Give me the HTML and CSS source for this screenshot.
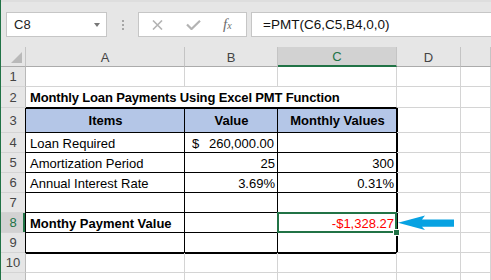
FILE: index.html
```html
<!DOCTYPE html>
<html lang="en">
<head>
  <meta charset="UTF-8">
  <meta name="viewport" content="width=device-width, initial-scale=1.0">
  <title>Monthly Loan Payments</title>
  <link rel="stylesheet" href="styles.css">
</head>
<body>

<div class="app">
  <div class="formula-bar">
    <div class="name-box">
      <span>C8</span>
      <span class="caret"></span>
    </div>
    <div class="grip"><i></i><i></i><i></i></div>
    <div class="fx-box">
      <svg class="icon-x" width="11" height="10" viewBox="0 0 11 10">
        <path d="M1 0.5 L10 9.5 M10 0.5 L1 9.5" />
      </svg>
      <svg class="icon-check" width="15" height="10" viewBox="0 0 15 10">
        <path d="M1 4.5 L5.5 9 L14 0.8" />
      </svg>
      <span class="fx">f<small>x</small></span>
    </div>
    <div class="formula">=PMT(C6,C5,B4,0,0)</div>
  </div>

  <div class="sheet">
    <!-- column headers -->
    <div class="corner"></div>
    <div class="colh">A</div>
    <div class="colh">B</div>
    <div class="colh active">C</div>
    <div class="colh">D</div>
    <div class="colh"></div>

    <!-- row 1 -->
    <div class="rowh">1</div>
    <div class="cell"></div>
    <div class="cell"></div>
    <div class="cell"></div>
    <div class="cell"></div>
    <div class="cell"></div>

    <!-- row 2 -->
    <div class="rowh">2</div>
    <div class="cell title">Monthly Loan Payments Using Excel PMT Function</div>
    <div class="cell"></div>
    <div class="cell"></div>

    <!-- row 3 -->
    <div class="rowh">3</div>
    <div class="cell tb head edge-l edge-t">Items</div>
    <div class="cell tb head edge-t">Value</div>
    <div class="cell tb head edge-t edge-r">Monthly Values</div>
    <div class="cell"></div>
    <div class="cell"></div>

    <!-- row 4 -->
    <div class="rowh">4</div>
    <div class="cell tb edge-l">Loan Required</div>
    <div class="cell tb money"><span>$</span><span>260,000.00</span></div>
    <div class="cell tb edge-r"></div>
    <div class="cell"></div>
    <div class="cell"></div>

    <!-- row 5 -->
    <div class="rowh">5</div>
    <div class="cell tb edge-l">Amortization Period</div>
    <div class="cell tb num">25</div>
    <div class="cell tb num edge-r">300</div>
    <div class="cell"></div>
    <div class="cell"></div>

    <!-- row 6 -->
    <div class="rowh">6</div>
    <div class="cell tb edge-l">Annual Interest Rate</div>
    <div class="cell tb num">3.69%</div>
    <div class="cell tb num edge-r">0.31%</div>
    <div class="cell"></div>
    <div class="cell"></div>

    <!-- row 7 -->
    <div class="rowh">7</div>
    <div class="cell tb edge-l"></div>
    <div class="cell tb"></div>
    <div class="cell tb edge-r"></div>
    <div class="cell"></div>
    <div class="cell"></div>

    <!-- row 8 -->
    <div class="rowh active">8</div>
    <div class="cell tb bold edge-l">Monthy Payment Value</div>
    <div class="cell tb"></div>
    <div class="cell tb num neg selected edge-r">-$1,328.27</div>
    <div class="cell"></div>
    <div class="cell"></div>

    <!-- row 9 -->
    <div class="rowh">9</div>
    <div class="cell tb edge-l edge-b"></div>
    <div class="cell tb edge-b"></div>
    <div class="cell tb edge-r edge-b"></div>
    <div class="cell"></div>
    <div class="cell"></div>

    <!-- row 10 -->
    <div class="rowh">10</div>
    <div class="cell"></div>
    <div class="cell"></div>
    <div class="cell"></div>
    <div class="cell"></div>
    <div class="cell"></div>

    <!-- row 11, only its top edge is in view -->
    <div class="rowh"></div>
    <div class="cell"></div>
    <div class="cell"></div>
    <div class="cell"></div>
    <div class="cell"></div>
    <div class="cell"></div>
  </div>

  <svg class="arrow" width="58" height="20" viewBox="0 0 58 20">
    <polygon points="1,9.8 28,2.6 25,6.6 57,6.6 57,13.8 25,13.8 28,17" />
  </svg>
</div>

</body>
</html>
```

FILE: styles.css
```css
body {
  margin: 0;
  background: #fff;
  overflow: hidden;
  font-family: "Liberation Sans", Arial, sans-serif;
}
.app {
  position: relative;
  width: 490px;
  height: 280px;
  border-left: 1px solid #217346;
  overflow: hidden;
}

/* formula bar */
.formula-bar {
  display: flex;
  height: 47px;
  box-sizing: border-box;
  padding: 10px 0 0 5px;
  background: #e6e6e6;
  border-top: 2px solid #dedede;
}
.name-box,
.fx-box,
.formula {
  height: 25px;
  box-sizing: border-box;
  background: #fff;
  border: 1px solid #c6c6c6;
  display: flex;
  align-items: center;
}
.name-box {
  width: 101px;
  padding: 0 6px 0 7px;
  justify-content: space-between;
  font-size: 13px;
  color: #222;
}
.caret {
  width: 0;
  height: 0;
  border-left: 3.5px solid transparent;
  border-right: 3.5px solid transparent;
  border-top: 4px solid #777;
}
.grip {
  width: 31px;
  display: flex;
  flex-direction: column;
  align-items: center;
  padding-top: 8px;
  gap: 2px;
}
.grip i {
  width: 2px;
  height: 2px;
  background: #a6a6a6;
}
.fx-box {
  width: 109px;
  padding-left: 13px;
}
.icon-x path,
.icon-check path {
  fill: none;
  stroke: #b3b3b3;
  stroke-width: 1.6;
}
.icon-check {
  margin-left: 23px;
}
.icon-check path {
  stroke-width: 2.2;
}
.fx {
  margin-left: 22px;
  font-family: "Liberation Serif", serif;
  font-style: italic;
  font-size: 15px;
  color: #6d6d6d;
}
.fx small {
  font-size: 10px;
}
.formula {
  flex: 1;
  margin-left: 4px;
  margin-right: -2px;
  padding-left: 11px;
  font-size: 13.5px;
  color: #111;
}

/* sheet grid */
.sheet {
  display: grid;
  grid-template-columns: 25px 159px 93px 119px 64px 30px;
  grid-template-rows: 20px 20px 21px 25px repeat(8, 20px);
  font-size: 13px;
}
.corner,
.colh,
.rowh {
  background: #e6e6e6;
  color: #444;
  box-sizing: border-box;
  display: flex;
  align-items: center;
  justify-content: center;
}
.corner {
  position: relative;
  border-right: 1px solid #c4c4c4;
  border-bottom: 1px solid #ababab;
}
.corner::after {
  content: "";
  position: absolute;
  right: 3px;
  bottom: 3px;
  border-left: 11px solid transparent;
  border-bottom: 11px solid #b9b9b9;
}
.colh {
  border-right: 1px solid #c4c4c4;
  border-bottom: 1px solid #ababab;
  padding-top: 1px;
}
.colh.active {
  background: #d2d2d2;
  color: #217346;
  border-bottom: 2px solid #217346;
}
.rowh {
  border-right: 1px solid #b9b9b9;
  border-bottom: 1px solid #d4d4d4;
}
.rowh.active {
  background: #d2d2d2;
  color: #217346;
  box-shadow: inset -2px 0 0 #217346;
}

.cell {
  --l: 0 0 transparent;
  --t: 0 0 transparent;
  --r: 0 0 transparent;
  --b: 0 0 transparent;
  box-sizing: border-box;
  display: flex;
  align-items: center;
  padding: 1px 3px 0 4px;
  white-space: nowrap;
  color: #000;
  border-right: 1px solid #d4d4d4;
  border-bottom: 1px solid #d4d4d4;
  box-shadow: var(--l), var(--t), var(--r), var(--b);
}
.cell.tb {
  border-right-color: #000;
  border-bottom-color: #000;
}
.edge-l { --l: -1px 0 #000; }
.edge-t { --t: inset 0 1px #000; }
.edge-r { --r: 1px 0 #000; }
.edge-b { --b: 0 1px #000; }

.title {
  grid-column: span 3;
  font-weight: bold;
  letter-spacing: -0.15px;
  border-bottom-color: #000;
}
.head {
  justify-content: center;
  font-weight: bold;
  background: #b4c6e7;
}
.bold {
  font-weight: bold;
}
.num {
  justify-content: flex-end;
  padding-right: 2px;
}
.money {
  justify-content: space-between;
  padding: 1px 3px 0 7px;
}
.neg {
  color: #f00;
}

/* active cell C8 */
.selected {
  position: relative;
}
.selected::after {
  content: "";
  position: absolute;
  top: -1px;
  left: -1px;
  right: -1px;
  bottom: -1px;
  border: 2px solid #217346;
  z-index: 1;
}
.selected::before {
  content: "";
  position: absolute;
  right: -4px;
  bottom: -4px;
  width: 5px;
  height: 5px;
  background: #217346;
  border: 1px solid #fff;
  z-index: 2;
}

.arrow {
  position: absolute;
  left: 396px;
  top: 213px;
  z-index: 3;
}
.arrow polygon {
  fill: #08a2e2;
}
```
